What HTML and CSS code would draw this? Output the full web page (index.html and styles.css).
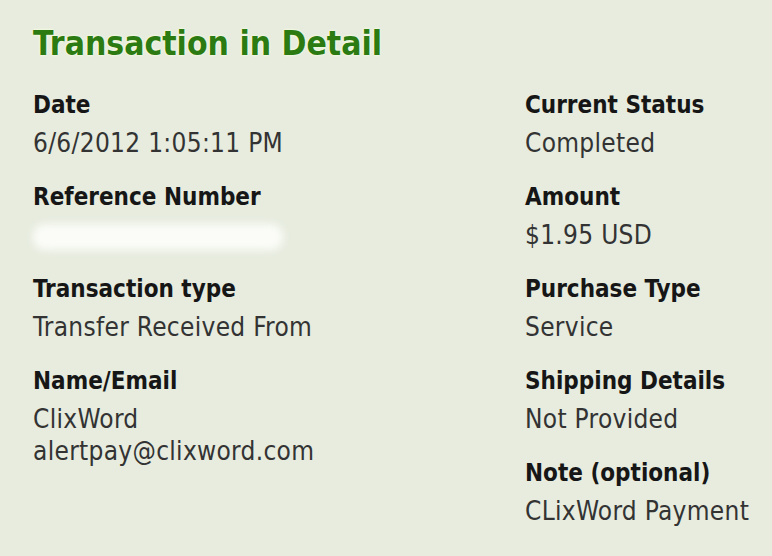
FILE: index.html
```html
<!DOCTYPE html>
<html>
<head>
<meta charset="utf-8">
<link rel="stylesheet" href="styles.css">
</head>
<body>
<main class="panel">
  <h1 class="title">Transaction in Detail</h1>
  <div class="grid">
    <div class="col">
      <div class="field">
        <div class="label">Date</div>
        <div class="value">6/6/2012 1:05:11 PM</div>
      </div>
      <div class="field">
        <div class="label">Reference Number</div>
        <div class="value"><span class="redacted"></span></div>
      </div>
      <div class="field">
        <div class="label">Transaction type</div>
        <div class="value">Transfer Received From</div>
      </div>
      <div class="field">
        <div class="label">Name/Email</div>
        <div class="value">ClixWord<br>alertpay@clixword.com</div>
      </div>
    </div>
    <div class="col">
      <div class="field">
        <div class="label">Current Status</div>
        <div class="value">Completed</div>
      </div>
      <div class="field">
        <div class="label">Amount</div>
        <div class="value">$1.95 USD</div>
      </div>
      <div class="field">
        <div class="label">Purchase Type</div>
        <div class="value">Service</div>
      </div>
      <div class="field">
        <div class="label">Shipping Details</div>
        <div class="value">Not Provided</div>
      </div>
      <div class="field">
        <div class="label">Note (optional)</div>
        <div class="value">CLixWord Payment</div>
      </div>
    </div>
  </div>
</main>
</body>
</html>
```
FILE: styles.css
```css
html, body {
  margin: 0;
  padding: 0;
  background: #e7ecdf;
}
body {
  width: 772px;
  height: 556px;
  overflow: hidden;
  font-family: "DejaVu Sans Condensed", "DejaVu Sans", sans-serif;
  font-stretch: condensed;
}
.panel {
  padding: 24px 0 0 33px;
}
.title {
  margin: 0 0 26px 0;
  font-size: 33.4px;
  line-height: 40px;
  font-weight: 700;
  color: #2b7a12;
  text-shadow: 0 0 3px #f4ffe0, 0 0 2px #ffffd8;
}
.grid {
  display: grid;
  grid-template-columns: 492px 1fr;
}
.col {
  display: flex;
  flex-direction: column;
  gap: 23px;
}
.label {
  font-size: 24px;
  line-height: 30px;
  font-weight: 700;
  color: #161616;
  margin-bottom: 7px;
}
.value {
  font-size: 26px;
  line-height: 32px;
  letter-spacing: 0.3px;
  color: #333;
  min-height: 32px;
}
.redacted {
  display: inline-block;
  width: 250px;
  height: 26px;
  vertical-align: middle;
  background: #fbfcf8;
  border-radius: 12px;
  filter: blur(4px);
}
```
